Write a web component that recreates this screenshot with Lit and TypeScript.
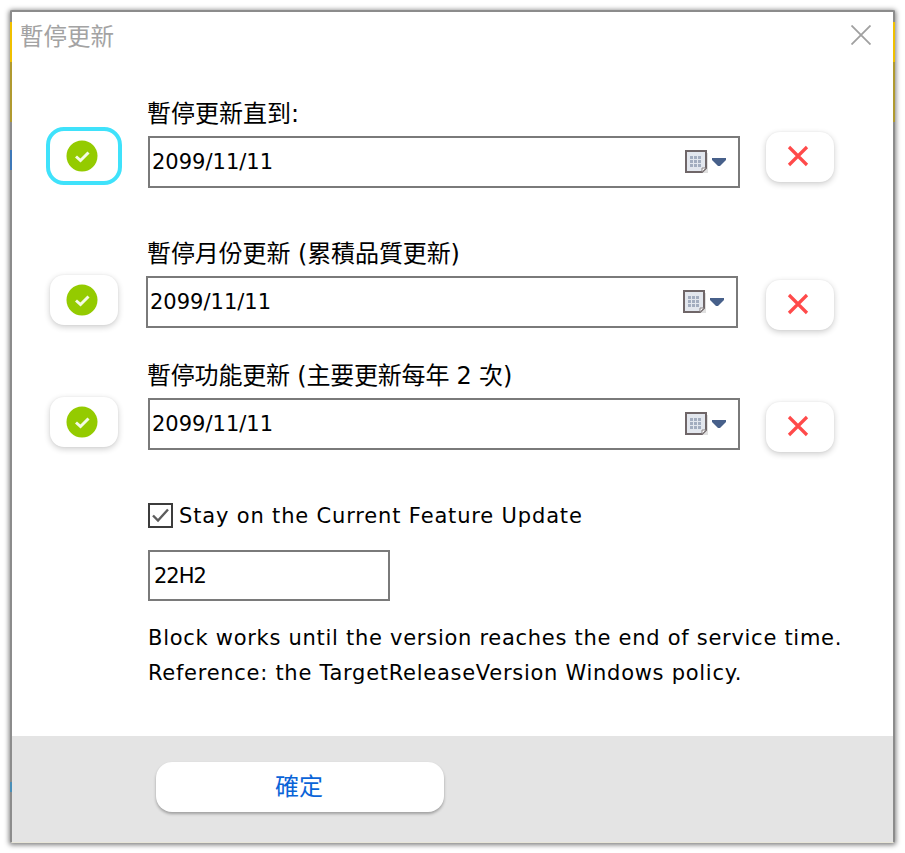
import { LitElement, html, svg, css } from "lit";
import { customElement } from "lit/decorators.js";

@customElement("app-root")
export class AppRoot extends LitElement {
  static styles = css`
    :host { display: block; width: 905px; height: 853px; background: #fff; font-family: "DejaVu Sans", "Noto Sans CJK TC", sans-serif; color: #000; box-sizing: border-box; padding: 10px; overflow: hidden; }
    * { box-sizing: border-box; }
    .win { position: relative; width: 885px; height: 833px; border: 2px solid #8c8c8c; border-bottom: 1px solid #e8e6d8; display: flex; flex-direction: column; background: #fff; box-shadow: 0 1px 5px 1px rgba(0,0,0,.5); border-radius: 2px; }
    .edge { position: absolute; width: 2px; }
    .e1 { left: -2px; top: 10px; height: 40px; background: #f0c000; }
    .e2 { left: -2px; top: 50px; height: 60px; background: #b09a30; }
    .e3 { left: -2px; top: 138px; height: 20px; background: #3f78b8; }
    .e4 { right: -2px; top: 10px; height: 40px; background: #f0c000; }
    .e5 { right: -2px; top: 50px; height: 60px; background: #b09a30; }
    .e6 { left: -2px; top: 770px; height: 10px; background: #4a8fb8; }
    .head { height: 48px; display: flex; align-items: center; justify-content: space-between; padding: 0 22px 3px 8px; flex: none; }
    .title { font-size: 23.5px; color: #a3a3a3; }
    .close { width: 20px; height: 20px; display: block; }
    .body { flex: 1; padding-top: 40px; }
    .row { display: flex; align-items: flex-start; padding-left: 38px; }
    .r2 { margin-top: 52px; }
    .r3 { margin-top: 32px; }
    .btn { width: 68px; height: 50px; border-radius: 14px; background: #fff; box-shadow: 0 2px 6px rgba(0,0,0,.2), 0 0 2px rgba(0,0,0,.06); display: flex; align-items: center; justify-content: center; flex: none; }
    .ok { margin-right: 30px; padding-right: 4px; }
    .r1 .ok { margin-top: 31px; box-shadow: none; outline: 4px solid #3fe2fb; outline-offset: 0; }
    .r2 .ok, .r3 .ok { margin-top: 35px; }
    .rm { margin-left: 26px; padding: 0 4px 2px 0; }
    .r1 .rm { margin-top: 32px; }
    .r2 .rm, .r3 .rm { margin-top: 40px; }
    .r2 .field { margin-left: -2px; margin-right: 2px; }
    .r2 .label { padding-left: 2px; letter-spacing: -.1px; }
    .r3 .label { letter-spacing: -.2px; }
    .field { width: 592px; flex: none; }
    .label { height: 36px; font-size: 24px; line-height: 28px; white-space: nowrap; text-indent: -1px; }
    .date { height: 52px; border: 2px solid #7a7a7a; display: flex; align-items: center; padding: 0 12px 0 2px; font-size: 21px; justify-content: space-between; }
    .picker { display: flex; align-items: center; gap: 4px; }
    .check { display: flex; align-items: center; gap: 6px; margin: 51px 0 0 136px; font-size: 21px; letter-spacing: .84px; height: 26px; }
    .box { width: 25px; height: 25px; border: 2px solid #3c3c3c; flex: none; display: block; margin-bottom: 1px; }
    .ver { width: 242px; height: 51px; margin: 21px 0 0 136px; border: 2px solid #7a7a7a; display: flex; align-items: center; padding-left: 4px; font-size: 21px; letter-spacing: -1px; }
    .note { margin: 20px 0 0 136px; font-size: 21px; line-height: 35px; white-space: nowrap; letter-spacing: .72px; }
    .foot { height: 106px; background: #e4e4e4; flex: none; padding: 26px 0 0 144px; }
    .confirm { width: 288px; height: 50px; border-radius: 16px; background: #fff; box-shadow: 0 2px 3px rgba(0,0,0,.3); color: #0a64d8; font-size: 24px; display: flex; align-items: center; justify-content: center; padding: 0 2px 5px 0; }
  `;

  private okIcon() {
    return html`<svg width="32" height="32" viewBox="0 0 32 32"><circle cx="16" cy="16" r="15.5" fill="#94cb00"/><path d="M10 16.5l4.5 4 8-8" fill="none" stroke="#f4fbe4" stroke-width="3"/></svg>`;
  }
  private rmIcon() {
    return html`<svg width="24" height="24" viewBox="0 0 24 24"><path d="M3 3L21 21M21 3L3 21" fill="none" stroke="#ff4a4a" stroke-width="3.2"/></svg>`;
  }
  private picker() {
    return html`<span class="picker">
      <svg width="23" height="25" viewBox="0 0 23 25">
        <path d="M3 3h20v20h-20z" fill="#000" opacity=".12"/>
        <path d="M1 1h20v17l-4 4H1z" fill="#e3e7ee" stroke="#6f6668" stroke-width="2"/>
        <path d="M21 18l-4 4v-4z" fill="#fff" stroke="#8a8486"/>
        <g fill="#a3adbf">
          ${[5, 9, 13].flatMap((x) => [6, 10, 14].map((y) => svg`<rect x=${x} y=${y} width="3" height="3"/>`))}
        </g>
      </svg>
      <svg width="14" height="8" viewBox="0 0 14 8"><path d="M0 0h14v2L8 8H6L0 2z" fill="#47608a"/></svg>
    </span>`;
  }
  private row(cls: string, label: string) {
    return html`<div class="row ${cls}">
      <div class="btn ok">${this.okIcon()}</div>
      <div class="field">
        <div class="label">${label}</div>
        <div class="date"><span>2099/11/11</span>${this.picker()}</div>
      </div>
      <div class="btn rm">${this.rmIcon()}</div>
    </div>`;
  }

  render() {
    return html`<div class="win">
      <i class="edge e1"></i><i class="edge e2"></i><i class="edge e3"></i>
      <i class="edge e4"></i><i class="edge e5"></i><i class="edge e6"></i>
      <div class="head">
        <span class="title">暫停更新</span>
        <svg class="close" viewBox="0 0 20 20"><path d="M.5.5L19.5 19.5M19.5.5L.5 19.5" stroke="#a0a0a0" stroke-width="1.8" fill="none"/></svg>
      </div>
      <div class="body">
        ${this.row("r1", "暫停更新直到:")}
        ${this.row("r2", "暫停月份更新 (累積品質更新)")}
        ${this.row("r3", "暫停功能更新 (主要更新每年 2 次)")}
        <div class="check">
          <svg class="box" viewBox="0 0 21 21"><path d="M3 10.5l5 5 10-11" fill="none" stroke="#5c5c5c" stroke-width="2.4"/></svg>
          <span>Stay on the Current Feature Update</span>
        </div>
        <div class="ver">22H2</div>
        <div class="note">Block works until the version reaches the end of service time.<br>Reference: the TargetReleaseVersion Windows policy.</div>
      </div>
      <div class="foot"><div class="confirm">確定</div></div>
    </div>`;
  }
}
